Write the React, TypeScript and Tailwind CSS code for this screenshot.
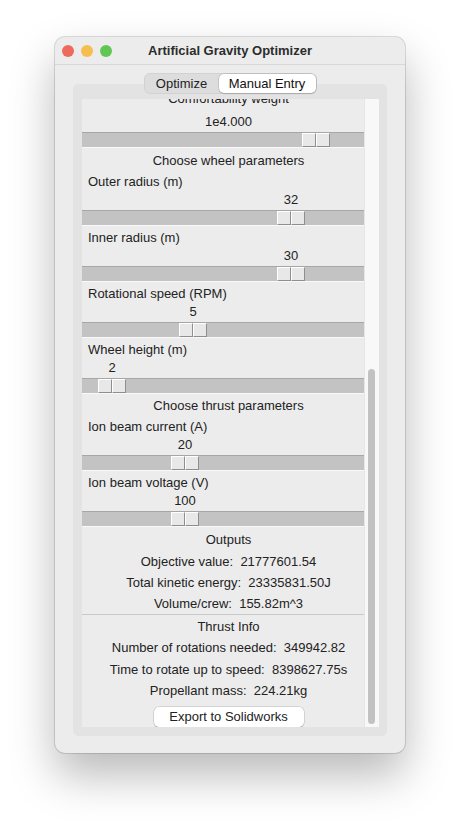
import React from "react";

function Half() {
  return (
    <div className="w-[14px] h-[14px] bg-[#e8e8e8] border-t border-l border-r border-b border-t-white border-l-white border-r-[#8e8e8e] border-b-[#8e8e8e]" />
  );
}

function Trough({ padClass }: { padClass: string }) {
  return (
    <div className={"h-[16px] flex border-t border-b border-t-[#a6a6a6] border-b-[#f9f9f9] bg-[#c3c3c3] " + padClass}>
      <Half />
      <Half />
    </div>
  );
}

function Param({ label, value, padClass }: { label: string; value: string; padClass: string }) {
  return (
    <>
      <div className="mt-[3px] h-[18px] leading-[18px] pl-[6px]">{label}</div>
      <div className={"h-[19px] flex " + padClass}>
        <div className="w-[28px] text-center leading-[18px] whitespace-nowrap">{value}</div>
      </div>
      <Trough padClass={padClass} />
    </>
  );
}

function Center({ children, cls }: { children: React.ReactNode; cls: string }) {
  return <div className={"text-center pl-[11px] whitespace-nowrap flex items-center justify-center " + cls}>{children}</div>;
}

export default function App() {
  return (
    <div className="w-[460px] h-[826px] bg-white pl-[55px] pt-[37px] font-['Liberation_Sans',Arial,sans-serif] text-[13px] text-[#222]">
      <div className="w-[350px] h-[716px] bg-[#ececec] rounded-[10px] shadow-[0_22px_45px_rgba(0,0,0,0.28),0_0_0_1px_rgba(0,0,0,0.13)] flex flex-col overflow-hidden">
        {/* Title bar */}
        <div className="h-[28px] grid grid-cols-[1fr_auto_1fr] items-center border-b border-[#d8d8d8]">
          <div className="flex items-center gap-[7px] pl-[7px]">
            <div className="w-[12px] h-[12px] rounded-full bg-[#ee6a5f]" />
            <div className="w-[12px] h-[12px] rounded-full bg-[#f5be4f]" />
            <div className="w-[12px] h-[12px] rounded-full bg-[#62c655]" />
          </div>
          <div className="font-bold text-[#2c2c2c] leading-[18px] pt-[1px]">Artificial Gravity Optimizer</div>
          <div />
        </div>
        {/* Body */}
        <div className="pt-[8px] flex flex-col items-center">
          <div className="relative z-10 w-[173px] h-[21px] flex rounded-[6px] bg-[#dddddd] border border-[#d2d2d2] text-[13px] pr-[0px]">
            <div className="w-[74px] flex items-center justify-center text-[#222]">Optimize</div>
            <div className="flex-1 flex items-center justify-center bg-white rounded-[5px] shadow-[0_0_0_0.5px_rgba(0,0,0,0.18),0_1px_1.5px_rgba(0,0,0,0.12)] text-[#111]">
              Manual Entry
            </div>
          </div>
          <div className="mt-[-10px] w-[314px] h-[652px] bg-[#e3e3e3] rounded-[5px] pt-[15px] pl-[9px] pr-[8px]">
            <div className="h-[628px] flex overflow-hidden">
              <div className="w-[282px] bg-[#ececec] flex flex-col overflow-hidden">
                <Center cls="mt-[-9px] h-[18px] leading-[18px]">Comfortability weight</Center>
                <Center cls="mt-[5px] h-[19px] leading-[18px] items-start">1e4.000</Center>
                <Trough padClass="pl-[220px]" />
                <Center cls="mt-[4px] h-[18px] leading-[18px]">Choose wheel parameters</Center>
                <Param label="Outer radius (m)" value="32" padClass="pl-[195px]" />
                <Param label="Inner radius (m)" value="30" padClass="pl-[195px]" />
                <Param label="Rotational speed (RPM)" value="5" padClass="pl-[97px]" />
                <Param label="Wheel height (m)" value="2" padClass="pl-[16px]" />
                <Center cls="mt-[3px] h-[18px] leading-[18px]">Choose thrust parameters</Center>
                <Param label="Ion beam current (A)" value="20" padClass="pl-[89px]" />
                <Param label="Ion beam voltage (V)" value="100" padClass="pl-[89px]" />
                <Center cls="mt-[3px] h-[21px]">Outputs</Center>
                <Center cls="h-[22px]">Objective value:&nbsp; 21777601.54</Center>
                <Center cls="h-[21px]">Total kinetic energy:&nbsp; 23335831.50J</Center>
                <Center cls="h-[21px]">Volume/crew:&nbsp; 155.82m^3</Center>
                <div className="h-px bg-[#c9c9c9]" />
                <Center cls="h-[22px]">Thrust Info</Center>
                <Center cls="h-[22px]">Number of rotations needed:&nbsp; 349942.82</Center>
                <Center cls="h-[21px]">Time to rotate up to speed:&nbsp; 8398627.75s</Center>
                <Center cls="h-[22px]">Propellant mass:&nbsp; 224.21kg</Center>
                <div className="mt-[5px] pl-[11px] flex justify-center">
                  <div className="w-[150px] h-[20px] shrink-0 bg-white rounded-[5px] shadow-[0_0_0_0.5px_rgba(0,0,0,0.2),0_1px_1px_rgba(0,0,0,0.12)] flex items-center justify-center">
                    Export to Solidworks
                  </div>
                </div>
              </div>
              <div className="w-[15px] bg-[#f8f8f8] border-l border-[#e6e6e6] pl-[3px] pt-[270px]">
                <div className="w-[7px] h-[355px] rounded-full bg-[#c2c2c2]" />
              </div>
            </div>
          </div>
        </div>
      </div>
    </div>
  );
}
